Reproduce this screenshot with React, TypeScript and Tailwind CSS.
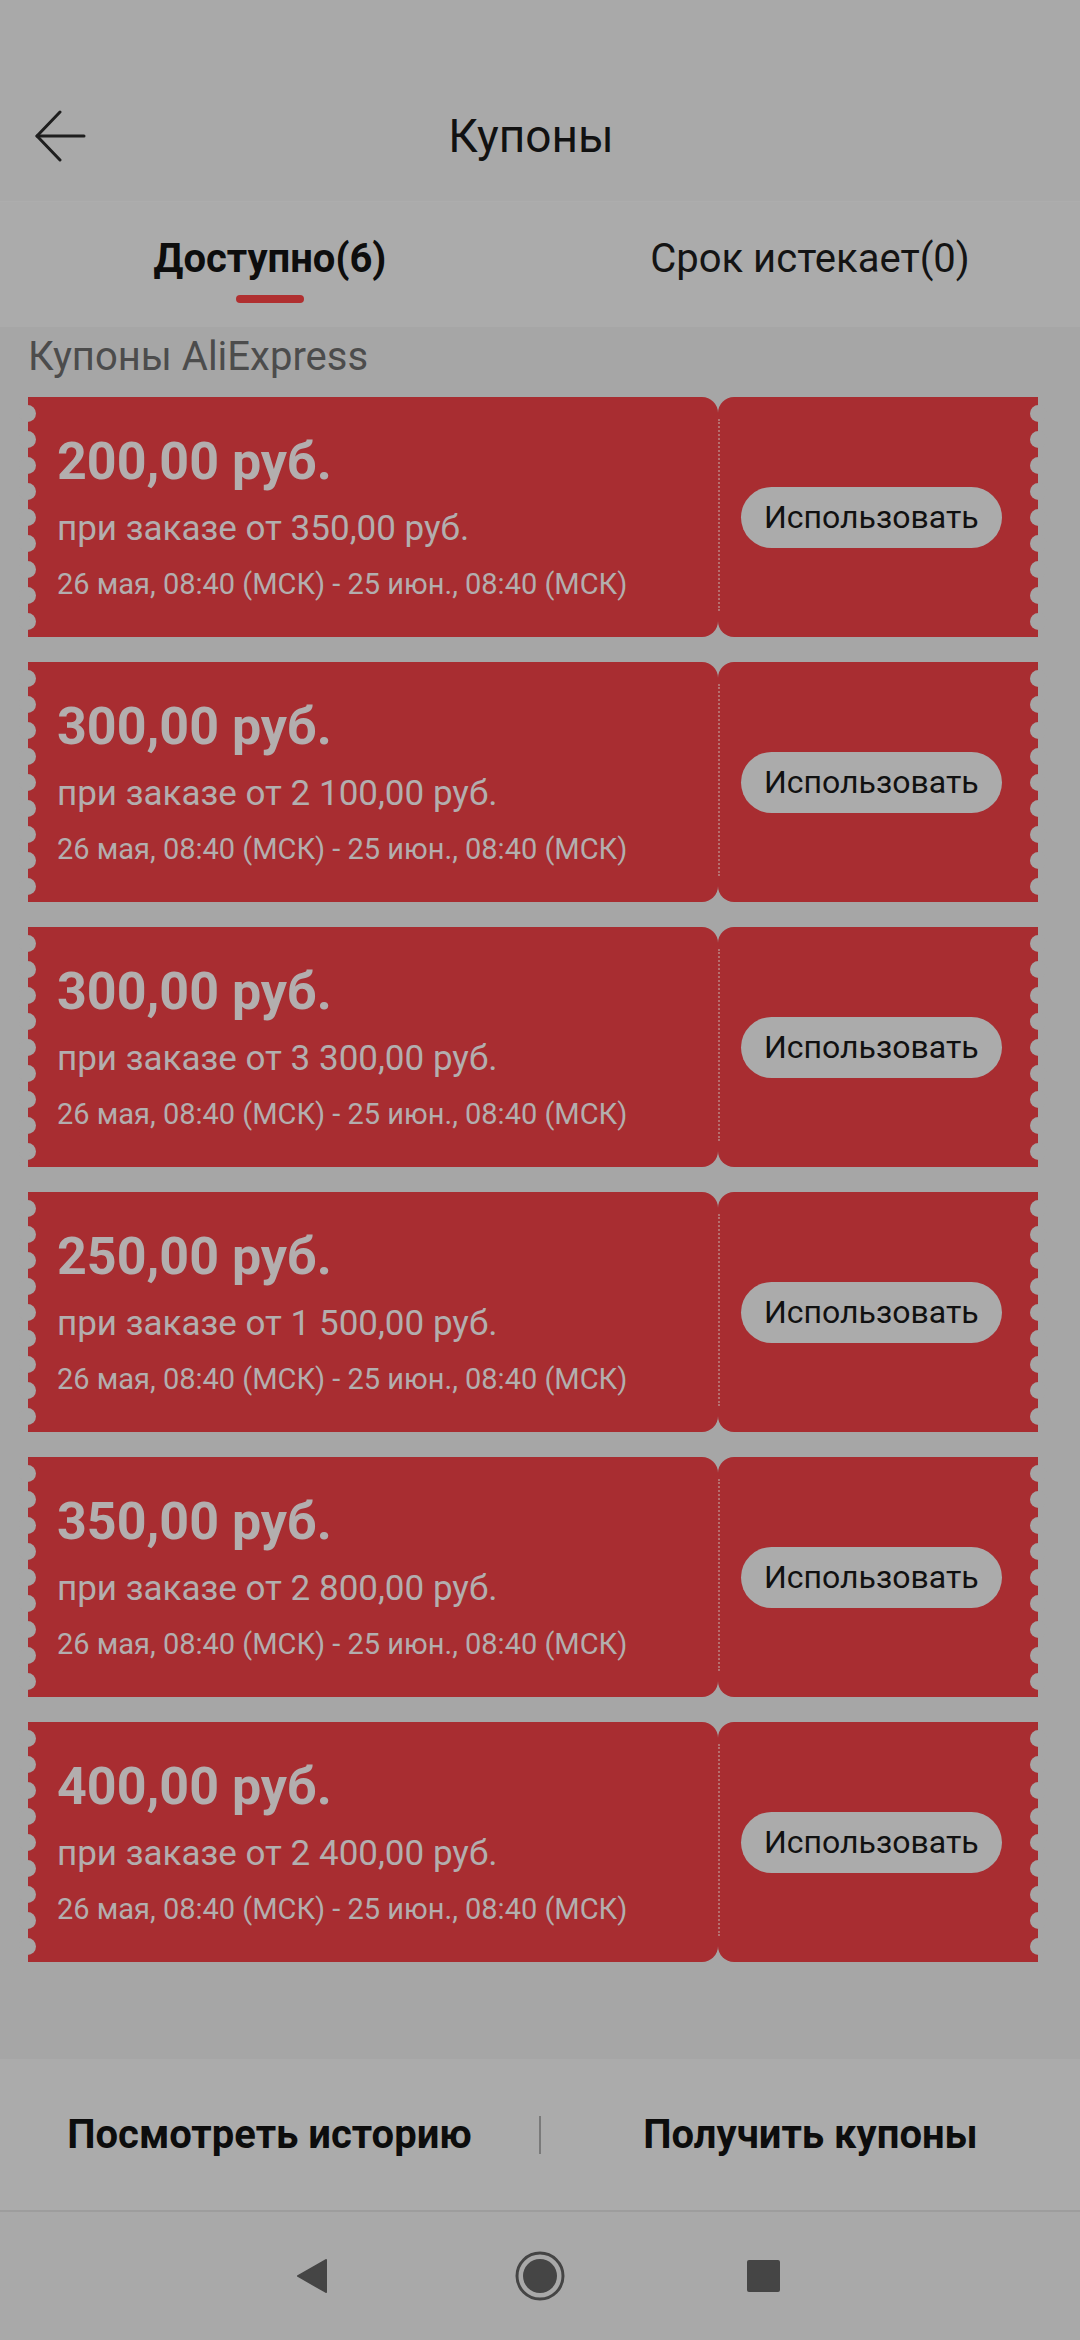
import React from "react";

//coupon data
const coupons = [
  { amount: "200,00 руб.", min: "при заказе от 350,00 руб." },
  { amount: "300,00 руб.", min: "при заказе от 2 100,00 руб." },
  { amount: "300,00 руб.", min: "при заказе от 3 300,00 руб." },
  { amount: "250,00 руб.", min: "при заказе от 1 500,00 руб." },
  { amount: "350,00 руб.", min: "при заказе от 2 800,00 руб." },
  { amount: "400,00 руб.", min: "при заказе от 2 400,00 руб." },
];

const period = "26 мая, 08:40 (МСК) - 25 июн., 08:40 (МСК)";

//perforated edge of the ticket
const Scallops = ({ side }: { side: "left" | "right" }) => (
  <div
    className={
      "absolute top-0 bottom-0 flex flex-col justify-center gap-[9px] " +
      (side === "left" ? "-left-[9px]" : "-right-[9px]")
    }
  >
    {Array.from({ length: 9 }).map((_, i) => (
      <div key={i} className="w-[17px] h-[17px] rounded-full bg-[#a6a6a6]" />
    ))}
  </div>
);

const Coupon = ({ amount, min }: { amount: string; min: string }) => (
  <div className="relative flex h-[240px] w-[1010px]">
    {/* left - amount and terms */}
    <div className="flex-1 flex flex-col justify-center pl-[29px] bg-[#a82d31] rounded-r-[16px] text-[#b3aeae]">
      <div className="text-[52px] leading-[60px] font-bold">{amount}</div>
      <div className="text-[35px] leading-[44px] mt-[15px]">{min}</div>
      <div className="text-[29px] leading-[36px] mt-[15px]">{period}</div>
    </div>
    {/* right - button */}
    <div className="w-[320px] flex bg-[#a82d31] rounded-l-[16px]">
      <div className="self-stretch mt-[22px] mb-[26px] border-l-2 border-dotted border-[#b56f6f]" />
      <div className="flex items-center pl-[21px]">
        <div className="h-[61px] px-[23px] flex items-center rounded-full bg-[#ababab] text-[32px] text-[#111]">
          Использовать
        </div>
      </div>
    </div>
    <Scallops side="left" />
    <Scallops side="right" />
  </div>
);

const App = () => {
  return (
    <div
      className="w-[1080px] h-[2340px] flex flex-col bg-[#a9a9a9] overflow-hidden"
      style={{ fontFamily: "Roboto, 'Noto Sans', sans-serif" }}
    >
      {/* header */}
      <div className="h-[202px] flex items-end border-b border-[#adadad]">
        <div className="relative w-full h-[130px] flex items-center justify-center pr-[18px]">
          <svg
            className="absolute left-[34px] top-[39px]"
            width="52"
            height="52"
            viewBox="0 0 52 52"
            fill="none"
            stroke="#1e1e1e"
            strokeWidth="3"
            strokeLinecap="round"
            strokeLinejoin="round"
          >
            <path d="M50 26H3" />
            <path d="M26 2L3 26L26 50" />
          </svg>
          <div className="text-[46px] leading-[52px] text-[#111]">Купоны</div>
        </div>
      </div>

      {/* tabs */}
      <div className="h-[125px] flex bg-[#ababab]">
        <div className="flex-1 flex flex-col items-center pt-[37px]">
          <div className="text-[40px] leading-[40px] font-bold text-[#0d0d0d]">Доступно(6)</div>
          <div className="mt-[16px] w-[68px] h-[8px] rounded-full bg-[#b02f30]" />
        </div>
        <div className="flex-1 flex flex-col items-center pt-[37px]">
          <div className="text-[40px] leading-[40px] text-[#141414]">Срок истекает(0)</div>
        </div>
      </div>

      {/* coupon list */}
      <div className="flex-1 bg-[#a6a6a6] pl-[28px] pt-[13px]">
        <div className="text-[40px] leading-[34px] text-[#4c4c4c]">Купоны AliExpress</div>
        <div className="mt-[23px] flex flex-col gap-[25px]">
          {coupons.map((c, i) => (
            <Coupon key={i} amount={c.amount} min={c.min} />
          ))}
        </div>
      </div>

      {/* bottom actions */}
      <div className="h-[153px] flex items-center bg-[#ababab] border-b-2 border-[#9d9d9d]">
        <div className="flex-1 text-center text-[40px] font-bold text-[#0d0d0d]">Посмотреть историю</div>
        <div className="w-[2px] h-[38px] bg-[#7a7a7a]" />
        <div className="flex-1 text-center text-[40px] font-bold text-[#0d0d0d]">Получить купоны</div>
      </div>

      {/* system nav */}
      <div className="h-[128px] flex items-center justify-center bg-[#a9a9a9]">
        <svg className="absolute left-[294px]" width="34" height="36" viewBox="0 0 34 36">
          <path d="M32 2L4 18L32 34Z" fill="#454545" stroke="#454545" strokeWidth="2" strokeLinejoin="round" />
        </svg>
        <svg width="50" height="50" viewBox="0 0 50 50">
          <circle cx="25" cy="25" r="23" fill="none" stroke="#454545" strokeWidth="3" />
          <circle cx="25" cy="25" r="17" fill="#454545" />
        </svg>
        <div className="absolute left-[747px] w-[33px] h-[32px] rounded-[2px] bg-[#454545]" />
      </div>
    </div>
  );
};

export default App;
